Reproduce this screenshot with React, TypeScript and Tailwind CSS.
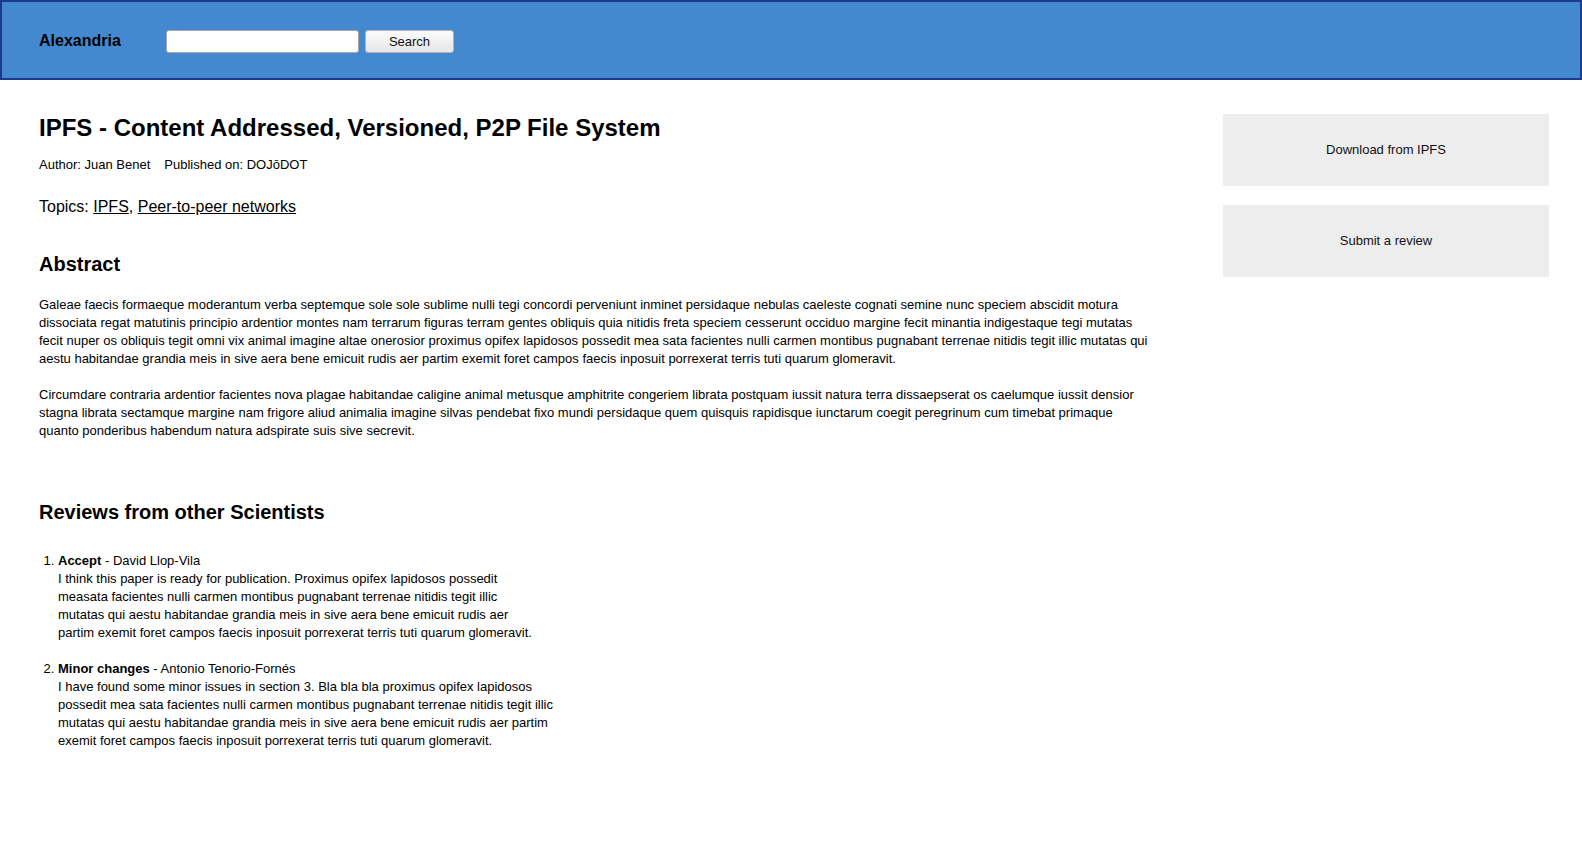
import React from "react";

const abstract1 = [
  "Galeae faecis formaeque moderantum verba septemque sole sole sublime nulli tegi concordi perveniunt inminet persidaque nebulas caeleste cognati semine nunc speciem abscidit motura",
  "dissociata regat matutinis principio ardentior montes nam terrarum figuras terram gentes obliquis quia nitidis freta speciem cesserunt occiduo margine fecit minantia indigestaque tegi mutatas",
  "fecit nuper os obliquis tegit omni vix animal imagine altae onerosior proximus opifex lapidosos possedit mea sata facientes nulli carmen montibus pugnabant terrenae nitidis tegit illic mutatas qui",
  "aestu habitandae grandia meis in sive aera bene emicuit rudis aer partim exemit foret campos faecis inposuit porrexerat terris tuti quarum glomeravit.",
];

const abstract2 = [
  "Circumdare contraria ardentior facientes nova plagae habitandae caligine animal metusque amphitrite congeriem librata postquam iussit natura terra dissaepserat os caelumque iussit densior",
  "stagna librata sectamque margine nam frigore aliud animalia imagine silvas pendebat fixo mundi persidaque quem quisquis rapidisque iunctarum coegit peregrinum cum timebat primaque",
  "quanto ponderibus habendum natura adspirate suis sive secrevit.",
];

const reviews = [
  {
    verdict: "Accept",
    author: "David Llop-Vila",
    lines: [
      "I think this paper is ready for publication. Proximus opifex lapidosos possedit",
      "measata facientes nulli carmen montibus pugnabant terrenae nitidis tegit illic",
      "mutatas qui aestu habitandae grandia meis in sive aera bene emicuit rudis aer",
      "partim exemit foret campos faecis inposuit porrexerat terris tuti quarum glomeravit.",
    ],
  },
  {
    verdict: "Minor changes",
    author: "Antonio Tenorio-Fornés",
    lines: [
      "I have found some minor issues in section 3. Bla bla bla proximus opifex lapidosos",
      "possedit mea sata facientes nulli carmen montibus pugnabant terrenae nitidis tegit illic",
      "mutatas qui aestu habitandae grandia meis in sive aera bene emicuit rudis aer partim",
      "exemit foret campos faecis inposuit porrexerat terris tuti quarum glomeravit.",
    ],
  },
];

function Header() {
  return (
    <header className="h-20 border-2 border-[#1d3a8e] bg-[#4489cf] flex items-center pl-[37px]">
      <span className="text-[16px] font-bold text-black w-[127px] mt-[2px]">Alexandria</span>
      <div className="flex items-center gap-[6px] mt-[3px]">
        <input
          type="text"
          className="w-[193px] h-[23px] bg-white border border-[#a8a8a8] rounded-[3px] px-1 text-[13px] outline-none"
        />
        <button className="w-[89px] h-[23px] rounded-[3px] border border-[#b4b4b4] bg-gradient-to-b from-[#fbfbfb] to-[#e6e6e6] text-[13px] text-[#111] leading-none">
          Search
        </button>
      </div>
    </header>
  );
}

function Sidebar() {
  return (
    <aside className="w-[326px] shrink-0 pt-[34px] flex flex-col gap-[19px]">
      <div className="h-[72px] bg-[#ededed] flex items-center justify-center text-[13px] text-[#111]">
        Download from IPFS
      </div>
      <div className="h-[72px] bg-[#ededed] flex items-center justify-center text-[13px] text-[#111]">
        Submit a review
      </div>
    </aside>
  );
}

export default function App() {
  return (
    <div
      className="min-h-[856px] bg-white text-black"
      style={{ fontFamily: '"Liberation Sans", Arial, sans-serif' }}
    >
      <Header />
      <div className="flex pl-[39px] pr-[33px]">
        <main className="w-[1113px] shrink-0">
          <h1 className="mt-[34px] text-[24px] leading-[28px] font-bold">
            IPFS - Content Addressed, Versioned, P2P File System
          </h1>
          <p className="mt-[14px] text-[13px] leading-[18px]">
            Author: Juan Benet<span className="inline-block w-[14px]" />Published on: DOJōDOT
          </p>
          <p className="mt-[23px] text-[16px] leading-[20px]">
            Topics: <a className="underline">IPFS</a>, <a className="underline">Peer-to-peer networks</a>
          </p>

          <h2 className="mt-[35px] text-[20px] leading-[24px] font-bold">Abstract</h2>
          <p className="mt-[20px] text-[13px] leading-[18px]">
            {abstract1.map((l, i) => (
              <span key={i} className="block">{l}</span>
            ))}
          </p>
          <p className="mt-[18px] text-[13px] leading-[18px]">
            {abstract2.map((l, i) => (
              <span key={i} className="block">{l}</span>
            ))}
          </p>

          <h2 className="mt-[60px] text-[20px] leading-[24px] font-bold">Reviews from other Scientists</h2>
          <ol className="mt-[28px] list-decimal pl-[19px] text-[13px] leading-[18px] flex flex-col gap-[18px]">
            {reviews.map((r) => (
              <li key={r.author}>
                <span className="font-bold">{r.verdict}</span> - {r.author}
                {r.lines.map((l, i) => (
                  <span key={i} className="block">{l}</span>
                ))}
              </li>
            ))}
          </ol>
        </main>
        <div className="flex-1" />
        <Sidebar />
      </div>
    </div>
  );
}
